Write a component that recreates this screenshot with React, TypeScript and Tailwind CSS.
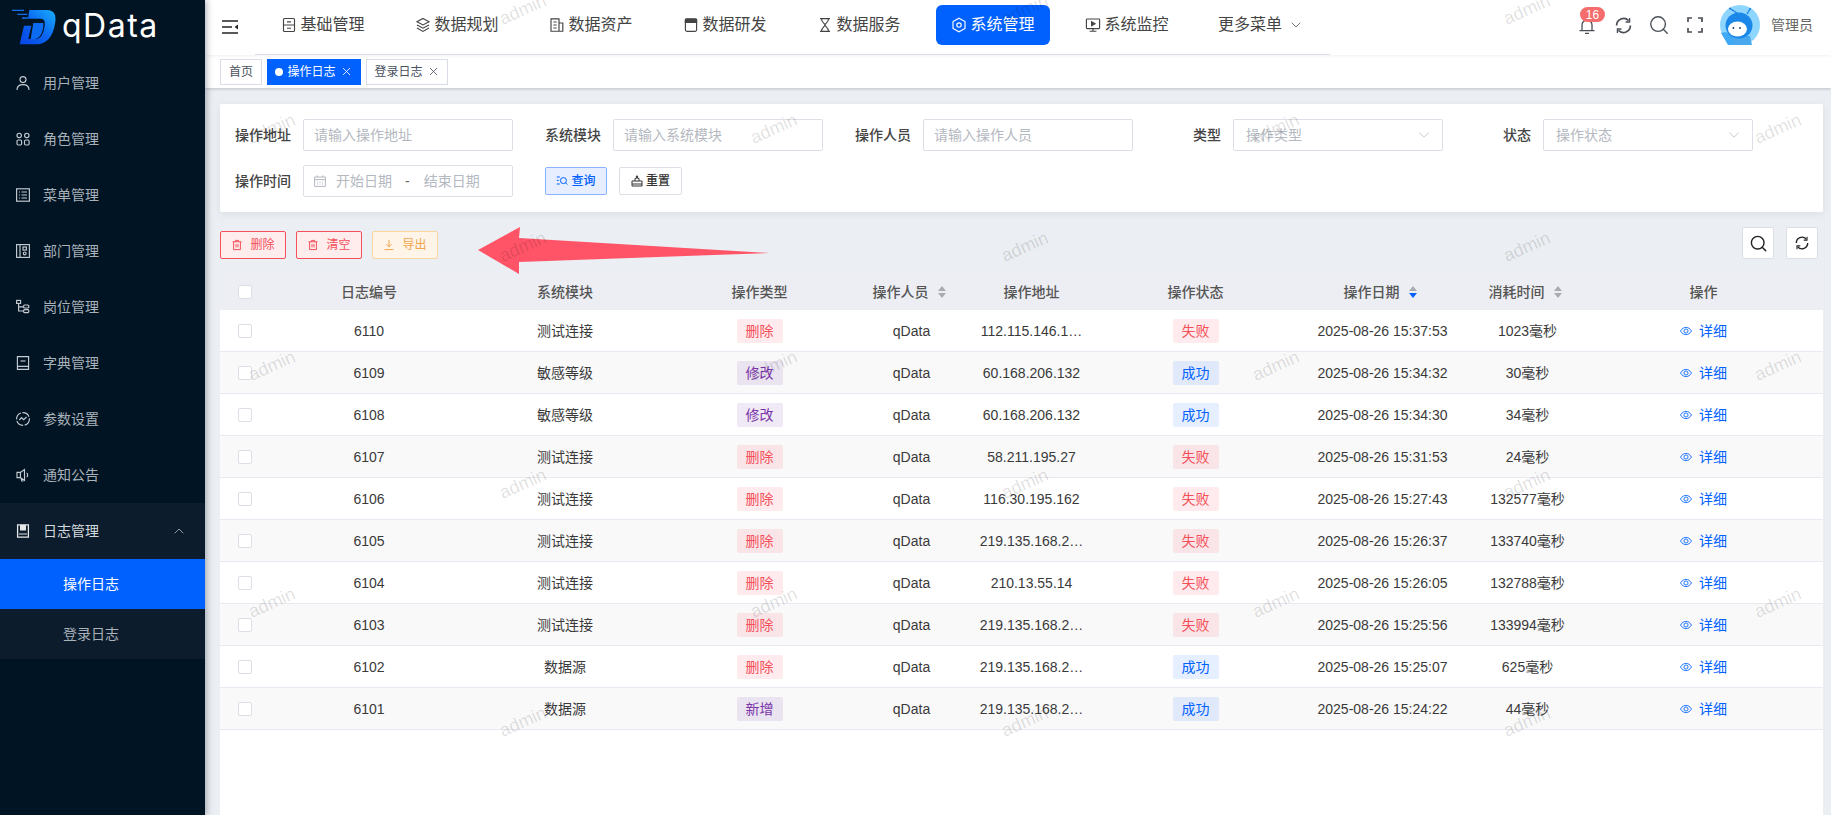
import { ChevronDown, ChevronUp, Search, X } from 'lucide-react';
import type { ReactNode } from 'react';

const FONT = '[font-family:"Liberation_Sans","Noto_Sans_CJK_SC",sans-serif]';
const COLS = 'grid grid-cols-[50px_198px_194px_195px_109px_131px_197px_177px_113px_239px]';

type IconProps = { className?: string };

function Line({ className, children }: IconProps & { children: ReactNode }) {
  return (
    <svg viewBox="0 0 16 16" fill="none" stroke="currentColor" strokeWidth="1.15" className={className}>
      {children}
    </svg>
  );
}

function SyncIcon({ className }: IconProps) {
  return (
    <svg viewBox="0 0 17 17" fill="none" stroke="currentColor" strokeWidth="1.7" className={className}>
      <path d="M13.6 3.6A7 7 0 0 0 1.6 8.5" />
      <path d="M3.4 13.4a7 7 0 0 0 12-4.9" />
      <path d="M14.6 1v4h-4M2.4 16v-4h4" strokeWidth="1.3" />
    </svg>
  );
}

const menuIcons: Record<string, ReactNode> = {
  user: <><circle cx="8" cy="4.6" r="3" /><path d="M2 15c0-3.6 2.4-5.4 6-5.4s6 1.8 6 5.4" /></>,
  role: <><circle cx="4.2" cy="4.4" r="2.2" /><circle cx="11.8" cy="4.4" r="2.2" /><rect x="2" y="9" width="4.6" height="5" rx="1.2" /><rect x="9.5" y="9" width="4.6" height="5" rx="1.2" /></>,
  menu: <><rect x="1.6" y="1.8" width="12.8" height="12.4" /><path d="M4 5h1M6.5 5H12M4 8h1M6.5 8H12M4 11h1M6.5 11H12" /></>,
  dept: <><rect x="1.6" y="1.6" width="12.8" height="12.8" /><path d="M5 1.6v12.8" /><rect x="8" y="4" width="3.4" height="3" /><circle cx="9.7" cy="10.4" r="1.4" /></>,
  post: <><rect x="1.6" y="1.4" width="4" height="3" /><path d="M3.6 4.4V12h5M3.6 7.8h5" /><rect x="8.6" y="6" width="5.2" height="3" rx="1" /><rect x="8.6" y="10.6" width="5.2" height="3" rx="1" /></>,
  dict: <><path d="M2.4 14.4h11.2V1.6H2.4zM2.4 11.4h11.2" /><path d="M5.5 6h5" /></>,
  param: <><circle cx="8" cy="8" r="6.4" strokeDasharray="8 1.6" /><path d="M4.4 9l2.2-2.4 2 2L11.6 6" /></>,
  notice: <><path d="M9.5 2.5v11L5.4 10.6H2V5.4h3.4zM5.4 5.4v5.2M6 11l.8 3h1.6" /><path d="M11.6 6c1.4.5 1.4 3.5 0 4" /></>,
};

const navIcons: Record<string, ReactNode> = {
  base: <><rect x="2.5" y="1.5" width="11" height="13" rx="1" /><path d="M2.5 8h11M6 4.8h4M6 11.2h4" /></>,
  plan: <><path d="M8 1.5l6 3.2-6 3.2-6-3.2z" /><path d="M2 8l6 3.2L14 8M2 11l6 3.4 6-3.4" /></>,
  asset: <><path d="M2 1.8h8v12.4H2zM10 6h3.8v8.2H10" /><path d="M4.4 5h3.2M4.4 8h3.2M4.4 11h3.2" /></>,
  dev: <><path d="M2.4 3.4a1.6 1.6 0 0 1 1.6-1.6h8a1.6 1.6 0 0 1 1.6 1.6v9.4a1.6 1.6 0 0 1-1.6 1.6H4a1.6 1.6 0 0 1-1.6-1.6z" /><path d="M2.4 5.4h11.2V2.4H2.4z" fill="currentColor" /></>,
  serve: <><path d="M3 1.6h10M3 14.4h10M4.4 1.6c0 4 3.6 5 3.6 6.4s-3.6 2.4-3.6 6.4M11.6 1.6c0 4-3.6 5-3.6 6.4s3.6 2.4 3.6 6.4" /></>,
  system: <><path d="M8 1.2l6 3.4v6.8l-6 3.4-6-3.4V4.6z" /><circle cx="8" cy="8" r="2.2" /></>,
  monitor: <><rect x="1.4" y="2" width="13.2" height="9.6" rx=".8" /><path d="M8 11.6v2.6M4.6 14.2h6.8" /><path d="M6.6 4.8l3.4 2-3.4 2z" fill="currentColor" /></>,
};

const tableRows = [
  ['6110', '测试连接', '删除', '112.115.146.1…', '失败', '2025-08-26 15:37:53', '1023毫秒'],
  ['6109', '敏感等级', '修改', '60.168.206.132', '成功', '2025-08-26 15:34:32', '30毫秒'],
  ['6108', '敏感等级', '修改', '60.168.206.132', '成功', '2025-08-26 15:34:30', '34毫秒'],
  ['6107', '测试连接', '删除', '58.211.195.27', '失败', '2025-08-26 15:31:53', '24毫秒'],
  ['6106', '测试连接', '删除', '116.30.195.162', '失败', '2025-08-26 15:27:43', '132577毫秒'],
  ['6105', '测试连接', '删除', '219.135.168.2…', '失败', '2025-08-26 15:26:37', '133740毫秒'],
  ['6104', '测试连接', '删除', '210.13.55.14', '失败', '2025-08-26 15:26:05', '132788毫秒'],
  ['6103', '测试连接', '删除', '219.135.168.2…', '失败', '2025-08-26 15:25:56', '133994毫秒'],
  ['6102', '数据源', '删除', '219.135.168.2…', '成功', '2025-08-26 15:25:07', '625毫秒'],
  ['6101', '数据源', '新增', '219.135.168.2…', '成功', '2025-08-26 15:24:22', '44毫秒'],
];

const watermarks = Array.from({ length: 7 }).flatMap((_, row) =>
  Array.from({ length: 4 }).map((_, col) => ({
    left: (row % 2 === 0 ? 318 : 67) + col * 502,
    top: 10 + row * 118.6,
  }))
);

function Tag({ text }: { text: string }) {
  const tone =
    text === '删除' || text === '失败'
      ? 'bg-[#ff3b4a]/10 text-[#f5505a]'
      : text === '成功'
        ? 'bg-[#0061ff]/10 text-[#0061ff]'
        : 'bg-[#6f2da8]/10 text-[#7a35a8]';
  return <span className={`flex h-6 w-[46px] items-center justify-center rounded-[2px] text-sm ${tone}`}>{text}</span>;
}

function SortCaret({ active }: { active?: boolean }) {
  return (
    <svg viewBox="0 0 10 14" className="h-[14px] w-[10px]">
      <path d="M5 1l4 5H1z" fill="#a8abb2" />
      <path d="M5 13L1 8h8z" fill={active ? '#0061ff' : '#a8abb2'} />
    </svg>
  );
}

function Checkbox() {
  return <span className="block h-[14px] w-[14px] rounded-[2px] border border-[#dcdfe6] bg-white" />;
}

function Field({ label, children }: { label: string; children: ReactNode }) {
  return (
    <div className="flex w-[278px] items-center">
      <span className="w-[68px] pr-3 text-right text-sm font-medium text-[#444]">{label}</span>
      {children}
    </div>
  );
}

function TextInput({ placeholder }: { placeholder: string }) {
  return (
    <input
      placeholder={placeholder}
      className="h-8 w-[210px] rounded-[2px] border border-[#dcdfe6] bg-white pl-[10px] text-sm outline-none placeholder:text-[#b4b8c0]"
    />
  );
}

function SelectBox({ placeholder }: { placeholder: string }) {
  return (
    <div className="flex h-8 w-[210px] items-center justify-between rounded-[2px] border border-[#dcdfe6] bg-white pl-3 pr-[9px] text-sm text-[#b4b8c0]">
      <span>{placeholder}</span>
      <ChevronDown size={18} strokeWidth={1} className="text-[#b4b8c0]" />
    </div>
  );
}

function TrashIcon() {
  return (
    <svg viewBox="0 0 12 12" fill="none" stroke="currentColor" strokeWidth="1" className="h-3 w-3">
      <path d="M1.5 2.8h9M4.4 2.8V1.4h3.2v1.4M2.6 2.8v7.8h6.8V2.8M5 5v3.4M7 5v3.4" />
    </svg>
  );
}

function ToolButton({ icon, label, tone }: { icon: ReactNode; label: string; tone: string }) {
  return (
    <button className={`flex h-7 w-[66px] items-center justify-center gap-[7px] rounded-[2px] border text-xs ${tone}`}>
      {icon}
      {label}
    </button>
  );
}

export default function App() {
  return (
    <div className={`flex h-screen w-full overflow-hidden bg-white ${FONT}`}>
      {/* Sidebar */}
      <aside className="relative z-40 flex w-[205px] shrink-0 flex-col bg-[#001424] shadow-[2px_0_6px_rgba(0,21,41,0.3)]">
        <div className="flex h-[55px] items-start pl-2 pt-[5px]">
          <svg viewBox="0 0 156 126" className="h-[42px] w-[52px]">
            <defs>
              <linearGradient id="logo" x1="0" y1="1" x2="1" y2="0">
                <stop offset="0" stopColor="#0844e4" />
                <stop offset="0.5" stopColor="#0a66f2" />
                <stop offset="1" stopColor="#1ab0fa" />
              </linearGradient>
            </defs>
            <path d="M12 14h36v4H12zM28 26h30v4H28zM42 37h18v4H42z" fill="#1170f0" />
            <path
              d="M64 15h52c24 0 30 16 25 42-6 36-24 61-56 61H35l13-56h22l-9 40h22c16 0 24-18 27-40 2-12-1-21-12-21H60z"
              fill="url(#logo)"
            />
            <path d="M76 54h30c2 16-6 46-25 48H68z" fill="#0b6cf2" />
          </svg>
          <span className="ml-[2px] mt-[1px] font-['Inter'] text-[32px] leading-[40px] tracking-[1.5px] text-white">qData</span>
        </div>
        {[
          ['user', '用户管理'],
          ['role', '角色管理'],
          ['menu', '菜单管理'],
          ['dept', '部门管理'],
          ['post', '岗位管理'],
          ['dict', '字典管理'],
          ['param', '参数设置'],
          ['notice', '通知公告'],
        ].map(([key, label]) => (
          <div key={key} className="flex h-14 items-center pl-[15px] text-sm text-[#a9b1b9]">
            <Line className="h-4 w-4 text-[#c5cbd1]">{menuIcons[key]}</Line>
            <span className="ml-3">{label}</span>
          </div>
        ))}
        <div className="flex h-14 items-center justify-between bg-[#0c1c2c] pl-4 pr-[18px] text-sm text-[#d5d9dd]">
          <span className="flex items-center">
            <svg viewBox="0 0 14 14" className="h-[14px] w-[14px]">
              <path d="M1.6 0.8h10.8v12.4H1.6z" fill="none" stroke="#e6e8ea" strokeWidth="1.3" />
              <path d="M4 1h6v5.6H4zM3 9.4h8v1.2H3z" fill="#e6e8ea" />
            </svg>
            <span className="ml-[13px]">日志管理</span>
          </span>
          <ChevronUp size={16} strokeWidth={1.1} className="text-[#c3c8cd]" />
        </div>
        <div className="flex h-[50px] items-center bg-[#0061ff] pl-[63px] text-sm text-white">操作日志</div>
        <div className="flex h-[50px] items-center bg-[#0c1c2c] pl-[63px] text-sm text-[#a9b1b9]">登录日志</div>
      </aside>

      <main className="relative flex min-w-0 flex-1 flex-col">
        {/* Top bar */}
        <header className="relative z-10 flex h-[55px] shrink-0 items-center bg-white pl-[17px] pr-[18px] shadow-[0_1px_3px_rgba(0,21,41,0.06)]">
          <svg viewBox="0 0 16 14" fill="none" stroke="#222" strokeWidth="1.4" className="-mt-[2px] h-[14px] w-4">
            <path d="M0 1h16M0 7h10M0 13h16" />
            <path d="M16 4.4v5L12.6 7z" fill="#222" stroke="none" />
          </svg>
          <nav className="ml-[17px] flex h-full items-center gap-5 border-b border-[#dcdfe6] pb-[5px] pl-[11px] pr-[26px]">
            {[
              ['base', '基础管理'],
              ['plan', '数据规划'],
              ['asset', '数据资产'],
              ['dev', '数据研发'],
              ['serve', '数据服务'],
              ['system', '系统管理'],
              ['monitor', '系统监控'],
            ].map(([key, label]) => (
              <div
                key={key}
                className={`flex h-10 w-[114px] items-center justify-center gap-[3px] rounded-md text-base ${
                  key === 'system' ? 'bg-[#0061ff] text-white' : 'text-[#444]'
                }`}
              >
                <Line className="h-4 w-4">{navIcons[key]}</Line>
                {label}
              </div>
            ))}
            <div className="flex h-10 items-center gap-[6px] pl-[14px] text-base text-[#444]">
              更多菜单
              <ChevronDown size={16} strokeWidth={1.1} />
            </div>
          </nav>
          <div className="-mt-[5px] ml-auto flex items-center text-[#4a4f57]">
            <div className="relative h-[16px] w-[16px] translate-y-[2px]">
              <svg viewBox="0 0 16 14" fill="none" stroke="currentColor" strokeWidth="1.3" className="h-[16px] w-[16px]">
                <path d="M3 10V5a5 5 0 0 1 10 0v5M0.5 10.6h15M6 13.4h4" />
              </svg>
              <span className="absolute -top-[12px] left-[1px] flex h-[15px] w-[25px] items-center justify-center rounded-full bg-[#f56c6c] text-xs text-white">
                16
              </span>
            </div>
            <SyncIcon className="ml-5 h-[17px] w-[17px]" />
            <Search size={22} strokeWidth={1.5} className="ml-4" />
            <svg viewBox="0 0 16 16" fill="none" stroke="currentColor" strokeWidth="1.7" className="ml-[17px] h-4 w-4">
              <path d="M1 5V1h4M11 1h4v4M1 11v4h4M15 11v4h-4" />
            </svg>
            <svg viewBox="0 0 40 40" className="ml-[17px] h-10 w-10">
              <circle cx="20" cy="20" r="20" fill="#8fd6ff" />
              <path d="M1 28c6-2 10 1 14 3v9H8z" fill="#3fa9f5" />
              <path d="M17 8L10 3.5M27 9l3-5" stroke="#1b7fe0" strokeWidth="1.3" fill="none" />
              <circle cx="10" cy="3.5" r="1" fill="#1b7fe0" />
              <circle cx="30" cy="4" r="1" fill="#1b7fe0" />
              <path d="M12 31h18l2 9H14z" fill="#4aa8ee" />
              <ellipse cx="19" cy="20.5" rx="13.5" ry="13" fill="#1b87e8" />
              <ellipse cx="17.5" cy="24" rx="9.5" ry="7.5" fill="#fff" />
              <circle cx="13.4" cy="23" r="0.9" fill="#1b3a6b" />
              <circle cx="20" cy="23" r="0.9" fill="#1b3a6b" />
            </svg>
            <span className="ml-[11px] text-sm text-[#666]">管理员</span>
          </div>
        </header>

        {/* Tags */}
        <div className="z-[5] flex h-[33px] shrink-0 items-center gap-[5px] bg-white pl-[15px] text-xs shadow-[0_1px_3px_rgba(0,21,41,0.2)]">
          <span className="flex h-[26px] w-[42px] items-center justify-center border border-[#d8dce5] text-[#495060]">首页</span>
          <span className="flex h-[26px] w-[94px] items-center justify-center gap-1 bg-[#0061ff] text-white">
            <span className="h-2 w-2 rounded-full bg-white" />
            操作日志
            <X size={13} strokeWidth={1.5} />
          </span>
          <span className="flex h-[26px] w-[82px] items-center justify-center gap-1 border border-[#d8dce5] text-[#495060]">
            登录日志
            <X size={13} strokeWidth={1.5} />
          </span>
        </div>

        {/* Content */}
        <section className="flex min-h-0 flex-1 flex-col bg-[#ebeef2] pl-[15px] pr-2 pt-4">
          <div className="h-[108px] shrink-0 rounded-[2px] bg-white pl-[15px] pt-[15px] shadow-[0_2px_8px_rgba(0,21,41,0.07)]">
            <div className="flex gap-8">
              <Field label="操作地址"><TextInput placeholder="请输入操作地址" /></Field>
              <Field label="系统模块"><TextInput placeholder="请输入系统模块" /></Field>
              <Field label="操作人员"><TextInput placeholder="请输入操作人员" /></Field>
              <Field label="类型"><SelectBox placeholder="操作类型" /></Field>
              <Field label="状态"><SelectBox placeholder="操作状态" /></Field>
            </div>
            <div className="mt-[14px] flex items-center">
              <Field label="操作时间">
                <div className="flex h-8 w-[210px] items-center rounded-[2px] border border-[#dcdfe6] pl-[10px] text-sm text-[#b4b8c0]">
                  <svg viewBox="0 0 12 12" fill="none" stroke="currentColor" strokeWidth="1" className="h-3 w-3">
                    <path d="M.6 2h10.8v9.4H.6zM.6 4.6h10.8M3 .4V2M9 .4V2M3 7h1M5.5 7h1M8 7h1M3 9h1M5.5 9h1M8 9h1" />
                  </svg>
                  <span className="ml-[10px]">开始日期</span>
                  <span className="ml-[13px] text-[#666]">-</span>
                  <span className="ml-[14px]">结束日期</span>
                </div>
              </Field>
              <button className="ml-8 flex h-7 w-[62px] items-center justify-center gap-[3px] rounded-[2px] border border-[#8ab4ff] bg-[#e6eeff] text-xs font-medium text-[#0061ff]">
                <svg viewBox="0 0 12 12" fill="none" stroke="currentColor" strokeWidth="1" className="h-3 w-3">
                  <path d="M.8 2h3M.8 5.4h2M.8 9h3" />
                  <circle cx="7.4" cy="5.6" r="3" />
                  <path d="M9.6 7.8l1.8 1.8" />
                </svg>
                查询
              </button>
              <button className="ml-3 flex h-7 w-[63px] items-center justify-center gap-[3px] rounded-[2px] border border-[#dcdfe6] bg-white text-xs font-medium text-[#333]">
                <svg viewBox="0 0 12 12" fill="none" stroke="currentColor" strokeWidth="1" className="h-3 w-3">
                  <path d="M1 6h10v5H1zM4 6V3.4h1.4V1h1.2v2.4H8V6M1 9h10" />
                </svg>
                重置
              </button>
            </div>
          </div>

          <div className="relative flex h-[62px] shrink-0 items-start justify-between">
            <div className="flex gap-[10px] pt-[19px]">
              <ToolButton icon={<TrashIcon />} label="删除" tone="border-[#f5505a] bg-[#ffecec] text-[#f5505a]" />
              <ToolButton icon={<TrashIcon />} label="清空" tone="border-[#f5505a] bg-[#ffecec] text-[#f5505a]" />
              <ToolButton
                icon={
                  <svg viewBox="0 0 12 12" fill="none" stroke="currentColor" strokeWidth="1" className="h-3 w-3">
                    <path d="M6 1v6.6M3.4 5.2L6 7.8l2.6-2.6M1.6 10.6h8.8" />
                  </svg>
                }
                label="导出"
                tone="border-[#fbd5a0] bg-[#fef4e8] text-[#f2a54c]"
              />
            </div>
            <div className="flex gap-3 pr-[5px] pt-[15px]">
              <span className="flex h-8 w-8 items-center justify-center rounded-[2px] border border-[#dcdfe6] bg-white text-[#222]">
                <Search size={19} strokeWidth={1.8} />
              </span>
              <span className="flex h-8 w-8 items-center justify-center rounded-[2px] border border-[#dcdfe6] bg-white text-[#222]">
                <SyncIcon className="h-[14px] w-[14px]" />
              </span>
            </div>
            {/* annotation arrow */}
            <svg viewBox="0 0 295 50" className="absolute left-[258px] top-[15px] h-[50px] w-[295px]">
              <path d="M0 23L42 0 41 11 291 26 41 35 41 47z" fill="#ff5468" />
            </svg>
          </div>

          <div className="min-h-0 flex-1 bg-white">
            <div className={`${COLS} h-9 items-center bg-[#edeef3] text-sm font-medium text-[#555]`}>
              <span className="flex justify-center"><Checkbox /></span>
              <span className="text-center">日志编号</span>
              <span className="text-center">系统模块</span>
              <span className="text-center">操作类型</span>
              <span className="flex items-center justify-center gap-2 pr-1">操作人员<SortCaret /></span>
              <span className="text-center">操作地址</span>
              <span className="text-center">操作状态</span>
              <span className="flex items-center justify-center gap-2 pr-1">操作日期<SortCaret active /></span>
              <span className="flex items-center justify-center gap-2 pr-1">消耗时间<SortCaret /></span>
              <span className="text-center">操作</span>
            </div>
            {tableRows.map((row, i) => (
              <div
                key={row[0]}
                className={`${COLS} h-[42px] items-center border-b border-[#e9e9f2] text-sm text-[#3a3a3a] ${
                  i % 2 === 1 ? 'bg-[#f9f9fa]' : 'bg-white'
                }`}
              >
                <span className="flex justify-center"><Checkbox /></span>
                <span className="text-center">{row[0]}</span>
                <span className="text-center">{row[1]}</span>
                <span className="flex justify-center"><Tag text={row[2]} /></span>
                <span className="text-center">qData</span>
                <span className="text-center">{row[3]}</span>
                <span className="flex justify-center"><Tag text={row[4]} /></span>
                <span className="text-center">{row[5]}</span>
                <span className="text-center">{row[6]}</span>
                <span className="flex items-center justify-center gap-[7px] text-[#0061ff]">
                  <svg viewBox="0 0 14 14" fill="none" stroke="currentColor" strokeWidth="1" className="h-3 w-3">
                    <path d="M.6 7C2.4 4 4.5 2.8 7 2.8S11.6 4 13.4 7c-1.8 3-3.9 4.2-6.4 4.2S2.4 10 .6 7z" />
                    <circle cx="7" cy="7" r="2.4" />
                  </svg>
                  详细
                </span>
              </div>
            ))}
          </div>
        </section>

        {/* Watermark */}
        <div className="pointer-events-none absolute inset-0 z-30 overflow-hidden">
          {watermarks.map((mark) => (
            <span
              key={`${mark.left}-${mark.top}`}
              style={{ left: mark.left, top: mark.top }}
              className="absolute -translate-x-1/2 -translate-y-1/2 -rotate-[24deg] font-['Liberation_Sans'] text-[18px] text-black/[0.13]"
            >
              admin
            </span>
          ))}
        </div>
      </main>
    </div>
  );
}
